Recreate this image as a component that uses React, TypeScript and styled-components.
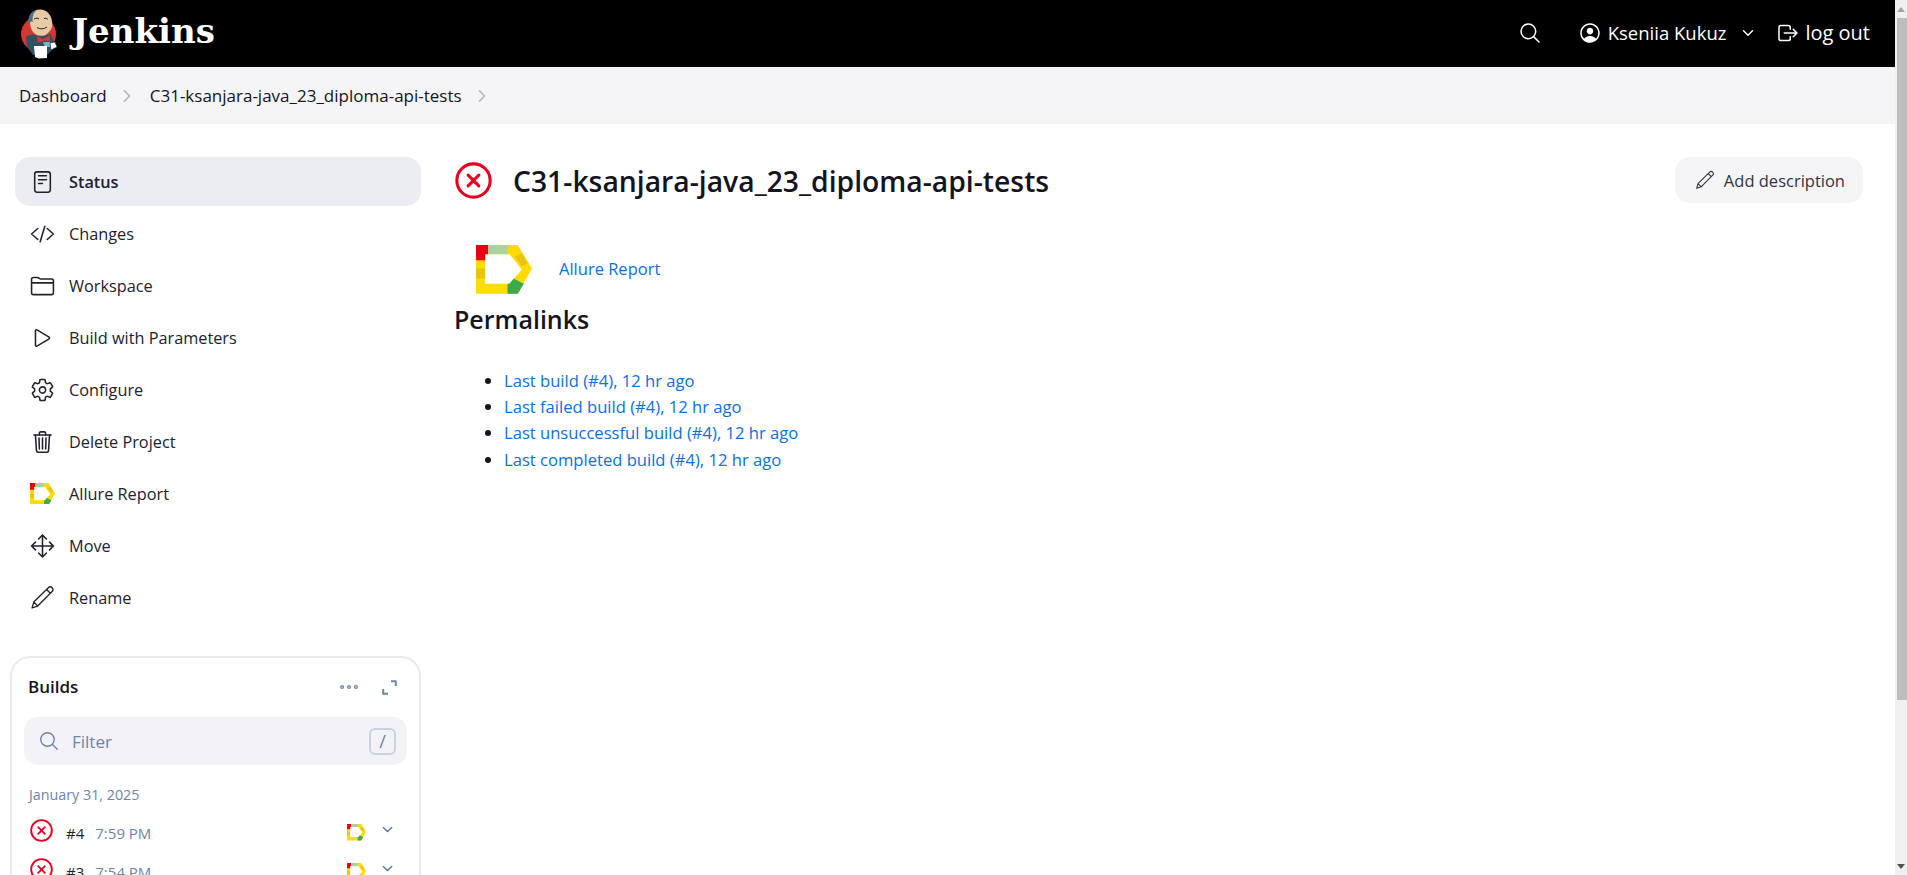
import { ReactNode } from "react";
import styled, { createGlobalStyle } from "styled-components";
import {
  IoChevronDownOutline,
  IoChevronForwardOutline,
  IoCodeSlashOutline,
  IoEllipsisHorizontalOutline,
  IoFolderOutline,
  IoLogOutOutline,
  IoMoveOutline,
  IoPersonCircleOutline,
  IoPlayOutline,
  IoReaderOutline,
  IoSearchOutline,
  IoSettingsOutline,
  IoTrashOutline,
} from "react-icons/io5";

const GlobalStyle = createGlobalStyle`
  html {
    scrollbar-width: none;
  }

  body {
    margin: 0;
    background: #fff;
    color: #14141f;
    font-family: "Open Sans", "Noto Sans", sans-serif;
    font-size: 16px;
  }
`;

const menuItems: { label: string; icon: ReactNode; active?: boolean }[] = [
  { label: "Status", icon: <IoReaderOutline />, active: true },
  { label: "Changes", icon: <IoCodeSlashOutline /> },
  { label: "Workspace", icon: <IoFolderOutline /> },
  { label: "Build with Parameters", icon: <IoPlayOutline /> },
  { label: "Configure", icon: <IoSettingsOutline /> },
  { label: "Delete Project", icon: <IoTrashOutline /> },
  { label: "Allure Report", icon: <AllureIcon size={25} /> },
  { label: "Move", icon: <IoMoveOutline /> },
  { label: "Rename", icon: <PencilIcon size={25} /> },
];

const permalinks = [
  "Last build (#4), 12 hr ago",
  "Last failed build (#4), 12 hr ago",
  "Last unsuccessful build (#4), 12 hr ago",
  "Last completed build (#4), 12 hr ago",
];

const builds = [
  { id: "#4", time: "7:59 PM" },
  { id: "#3", time: "7:54 PM" },
];

function AllureIcon({ size }: { size: number }) {
  return (
    <svg width={size} height={(size * 48) / 55} viewBox="0 0 55 48">
      <path
        fill="#ffdc00"
        fillRule="evenodd"
        d="M0 0H41L55 23L41 48H0ZM9 9V38H33L45 24L33 9Z"
      />
      <path fill="#e60012" d="M0 0H12V9H9V15H0Z" />
      <path fill="#a8d2a5" d="M12 0H31V9H12Z" />
      <path fill="#e5c50e" d="M0 23H9V33H0Z" />
      <path fill="#e5c50e" d="M38 11L45 8L51 18L45 21Z" />
      <path fill="#3aaa4a" d="M37 33L47 38L41 48H31V38H33Z" />
    </svg>
  );
}

function PencilIcon({ size }: { size: number }) {
  return (
    <svg width={size} height={size} viewBox="0 0 24 24" fill="none">
      <path
        d="M2 22L3.6 16.4L17.6 2.6C18.6 1.6 20.2 1.6 21.2 2.6C22.2 3.6 22.2 5.2 21.2 6.2L7.4 20.2L2 22ZM3.6 16.4L7.4 20.2M15.9 4.3L19.5 7.9"
        stroke="currentColor"
        strokeWidth="1.3"
        strokeLinejoin="round"
        strokeLinecap="round"
      />
    </svg>
  );
}

function FailedIcon({ size }: { size: number }) {
  return (
    <svg width={size} height={size} viewBox="0 0 36 36" fill="none">
      <circle cx="18" cy="18" r="16.2" stroke="#e6001f" strokeWidth="3" />
      <path
        d="M12.8 12.8L23.2 23.2M23.2 12.8L12.8 23.2"
        stroke="#e6001f"
        strokeWidth="3"
        strokeLinecap="round"
      />
    </svg>
  );
}

function JenkinsLogo() {
  return (
    <svg width="38" height="50" viewBox="0 0 38 50">
      <circle cx="18.5" cy="25" r="17.5" fill="#d33833" />
      <path
        fill="#335061"
        d="M6 28C10 25 14 25 18 27C23 27 27 26 31 25L34 33L36 36L31 42L27 46H13L7 38Z"
      />
      <path
        fill="#e9caa6"
        d="M10 12C10 5 13 0.5 20 0.5C27 0.5 31 6 32 12C33 18 31 21 28 24C25 27 21 27.5 17 26C12 24 10 18 10 12Z"
      />
      <path
        fill="#49728b"
        d="M9 15C7 9 10 2 17 1C13 4 12 8 13 13C11 12 10 13 9 15Z"
      />
      <path
        fill="none"
        stroke="#231f20"
        strokeWidth="1"
        d="M14 10C16 9 18 9 19 10M24 9.5C26 9 27 9.5 28 10.5M17 18.5C20 20.5 24 20 27 18"
      />
      <path fill="#d33833" d="M17 27L23 30L30 26.5L30 32L24 31.5L18 34Z" />
      <path fill="#81b0c4" d="M23 33H30V38H25Z" />
      <path fill="#fff" d="M14 37H27V49L19 49.5L15 48Z" />
      <path fill="#fff" stroke="#231f20" strokeWidth="0.6" d="M30 34L35 33L37 38L31 41Z" />
    </svg>
  );
}

function ExpandIcon() {
  return (
    <svg width="15" height="15" viewBox="0 0 15 15" fill="none">
      <path
        d="M9 1.2H13.8V6M1.2 9V13.8H6"
        stroke="#6d85a8"
        strokeWidth="2"
        strokeLinejoin="round"
      />
    </svg>
  );
}

export default function App() {
  return (
    <Viewport>
      <GlobalStyle />
      <Header>
        <Brand>
          <JenkinsLogo />
          <BrandName>Jenkins</BrandName>
        </Brand>
        <HeaderActions>
          <HeaderSearch>
            <IoSearchOutline />
          </HeaderSearch>
          <UserLink>
            <IoPersonCircleOutline />
            <span>Kseniia Kukuz</span>
            <UserChevron>
              <IoChevronDownOutline />
            </UserChevron>
          </UserLink>
          <LogoutLink>
            <IoLogOutOutline />
            <span>log out</span>
          </LogoutLink>
        </HeaderActions>
      </Header>

      <Breadcrumbs>
        <Crumb>Dashboard</Crumb>
        <CrumbArrow>
          <IoChevronForwardOutline />
        </CrumbArrow>
        <Crumb>C31-ksanjara-java_23_diploma-api-tests</Crumb>
        <CrumbArrow>
          <IoChevronForwardOutline />
        </CrumbArrow>
      </Breadcrumbs>

      <Page>
        <Sidebar>
          <Menu>
            {menuItems.map((item) => (
              <MenuItem key={item.label} $active={item.active}>
                <MenuIcon>{item.icon}</MenuIcon>
                {item.label}
              </MenuItem>
            ))}
          </Menu>

          <BuildsCard>
            <BuildsHeader>
              <BuildsTitle>Builds</BuildsTitle>
              <BuildsTools>
                <IoEllipsisHorizontalOutline />
                <ExpandIcon />
              </BuildsTools>
            </BuildsHeader>
            <FilterBox>
              <FilterIcon>
                <IoSearchOutline />
              </FilterIcon>
              <FilterInput placeholder="Filter" readOnly />
              <SlashKey>/</SlashKey>
            </FilterBox>
            <BuildsDate>January 31, 2025</BuildsDate>
            {builds.map((build) => (
              <BuildRow key={build.id}>
                <FailedIcon size={23} />
                <BuildId>{build.id}</BuildId>
                <BuildTime>{build.time}</BuildTime>
                <BuildExtras>
                  <AllureIcon size={19} />
                  <BuildChevron>
                    <IoChevronDownOutline />
                  </BuildChevron>
                </BuildExtras>
              </BuildRow>
            ))}
          </BuildsCard>
        </Sidebar>

        <Main>
          <TitleRow>
            <FailedIcon size={37} />
            <Title>C31-ksanjara-java_23_diploma-api-tests</Title>
            <AddDescription>
              <PencilIcon size={20} />
              Add description
            </AddDescription>
          </TitleRow>

          <ReportRow>
            <AllureIcon size={56} />
            <ReportLink href="#">Allure Report</ReportLink>
          </ReportRow>

          <SectionTitle>Permalinks</SectionTitle>
          <PermalinkList>
            {permalinks.map((text) => (
              <li key={text}>
                <PermalinkLink href="#">{text}</PermalinkLink>
              </li>
            ))}
          </PermalinkList>
        </Main>
      </Page>

      <ScrollBar>
        <ScrollArrow $dir="up" />
        <ScrollThumb />
        <ScrollArrow $dir="down" />
      </ScrollBar>
    </Viewport>
  );
}

const Viewport = styled.div`
  height: 875px;
  overflow: hidden;
  padding-right: 12px;
`;

const ScrollBar = styled.div`
  position: fixed;
  top: 0;
  right: 0;
  bottom: 0;
  display: flex;
  flex-direction: column;
  width: 12px;
  background: #f0f0f0;
`;

const ScrollArrow = styled.div<{ $dir: "up" | "down" }>`
  display: flex;
  align-items: center;
  justify-content: center;
  height: 18px;
  margin-top: ${(p) => (p.$dir === "down" ? "auto" : "0")};

  &::before {
    content: "";
    border-left: 4px solid transparent;
    border-right: 4px solid transparent;
    ${(p) =>
      p.$dir === "up"
        ? "border-bottom: 5px solid #a3a3a3;"
        : "border-top: 5px solid #505050;"}
  }
`;

const ScrollThumb = styled.div`
  height: 682px;
  margin-left: 2px;
  background: #bdbdbd;
`;

const Header = styled.header`
  display: flex;
  align-items: center;
  justify-content: space-between;
  height: 67px;
  padding: 0 25px 0 20px;
  background: #000;
  color: #fff;
`;

const Brand = styled.div`
  display: flex;
  align-items: center;
  gap: 14px;
`;

const BrandName = styled.span`
  padding-bottom: 6px;
  font-family: "DejaVu Serif", "Liberation Serif", serif;
  font-size: 34px;
  font-weight: 700;
`;

const HeaderActions = styled.div`
  display: flex;
  align-items: center;
  padding-bottom: 2px;
  font-size: 18.5px;

  svg {
    width: 24px;
    height: 24px;
  }
`;

const HeaderSearch = styled.div`
  display: flex;
  margin-right: 36px;
`;

const UserLink = styled.div`
  display: flex;
  align-items: center;
  gap: 6px;
  margin-right: 20px;
`;

const UserChevron = styled.span`
  display: flex;
  margin-left: 8px;

  svg {
    width: 16px;
    height: 16px;
  }
`;

const LogoutLink = styled.div`
  display: flex;
  align-items: center;
  gap: 5px;
  font-size: 20px;
`;

const Breadcrumbs = styled.nav`
  display: flex;
  align-items: center;
  height: 57px;
  padding: 0 19px;
  background: #f5f5f7;
`;

const Crumb = styled.span`
  font-size: 17px;
  font-weight: 500;
`;

const CrumbArrow = styled.span`
  display: flex;
  margin: 0 14px 0 11px;
  color: #a9bad2;

  svg {
    width: 18px;
    height: 18px;
  }
`;

const Page = styled.div`
  display: flex;
  align-items: flex-start;
`;

const Sidebar = styled.aside`
  flex: none;
  box-sizing: border-box;
  width: 431px;
  padding: 33px 10px 0;
`;

const Menu = styled.div`
  display: flex;
  flex-direction: column;
  gap: 3px;
  padding: 0 0 0 5px;
  margin-bottom: 34px;
`;

const MenuItem = styled.div<{ $active?: boolean }>`
  display: flex;
  align-items: center;
  gap: 14px;
  height: 49px;
  padding-left: 15px;
  border-radius: 15px;
  background: ${(p) => (p.$active ? "#ecedf3" : "transparent")};
  font-size: 16.3px;
  font-weight: ${(p) => (p.$active ? 600 : 400)};
  color: #22222e;
`;

const MenuIcon = styled.span`
  display: flex;
  align-items: center;
  justify-content: center;
  width: 25px;
  height: 25px;
  font-size: 26px;
`;

const BuildsCard = styled.section`
  padding: 17px 12px;
  border: 2px solid #e9e9f2;
  border-bottom: none;
  border-radius: 20px 20px 0 0;
  height: 500px;
  box-sizing: border-box;
`;

const BuildsHeader = styled.div`
  display: flex;
  align-items: center;
  justify-content: space-between;
  padding: 0 10px 0 4px;
  margin-bottom: 18px;
`;

const BuildsTitle = styled.h2`
  margin: 0;
  font-size: 17px;
  font-weight: 600;
  line-height: 24px;
`;

const BuildsTools = styled.div`
  display: flex;
  align-items: center;
  gap: 22px;
  color: #6d85a8;

  svg:first-child {
    width: 22px;
    height: 22px;
  }
`;

const FilterBox = styled.div`
  display: flex;
  align-items: center;
  height: 48px;
  padding: 0 11px 0 14px;
  border-radius: 14px;
  background: #f2f2f7;
`;

const FilterIcon = styled.span`
  display: flex;
  color: #6d85a8;

  svg {
    width: 22px;
    height: 22px;
  }
`;

const FilterInput = styled.input`
  flex: 1;
  min-width: 0;
  margin-left: 12px;
  padding: 0;
  border: none;
  outline: none;
  background: transparent;
  font: inherit;
  font-size: 17px;

  &::placeholder {
    color: #6d85a8;
    opacity: 1;
  }
`;

const SlashKey = styled.span`
  display: flex;
  align-items: center;
  justify-content: center;
  width: 27px;
  height: 27px;
  border: 2px solid #c8d3e2;
  border-radius: 6px;
  box-sizing: border-box;
  color: #6d85a8;
  font-size: 18px;
`;

const BuildsDate = styled.div`
  margin: 20px 0 8px 5px;
  color: #6d85a8;
  font-size: 14.3px;
  line-height: 20px;
`;

const BuildRow = styled.div`
  display: flex;
  align-items: center;
  height: 39px;
  padding: 0 0 0 6px;
  font-size: 15px;

  > svg {
    margin-top: -4px;
  }
`;

const BuildId = styled.span`
  margin-left: 13px;
  color: #22222e;
`;

const BuildTime = styled.span`
  margin-left: 11px;
  color: #6d85a8;
`;

const BuildExtras = styled.div`
  display: flex;
  align-items: center;
  gap: 14px;
  margin-left: auto;
  padding-right: 12px;
`;

const BuildChevron = styled.span`
  display: flex;
  margin-top: -6px;
  color: #5f7797;

  svg {
    width: 15px;
    height: 15px;
  }
`;

const Main = styled.main`
  flex: 1;
  min-width: 0;
  padding: 33px 32px 0 24px;
`;

const TitleRow = styled.div`
  display: flex;
  align-items: center;
  height: 47px;
`;

const Title = styled.h1`
  flex: 1;
  margin: 0 0 0 21px;
  font-size: 28.3px;
  font-weight: 600;
`;

const AddDescription = styled.button`
  display: flex;
  align-items: center;
  align-self: flex-start;
  gap: 9px;
  height: 46px;
  padding: 0 18px 0 21px;
  border: none;
  border-radius: 15px;
  background: #f5f5f7;
  color: #33333f;
  font: inherit;
  font-size: 16.5px;

  svg {
    margin-left: -1px;
  }
`;

const ReportRow = styled.div`
  display: flex;
  align-items: center;
  gap: 27px;
  margin-top: 41px;
  padding-left: 21px;
`;

const ReportLink = styled.a`
  padding-bottom: 2px;
  color: #0b6fdc;
  font-size: 16.5px;
  text-decoration: none;
`;

const SectionTitle = styled.h2`
  margin: 8px 0 0 -1px;
  font-size: 25px;
  font-weight: 600;
  line-height: 34px;
`;

const PermalinkList = styled.ul`
  margin: 32px 0 0;
  padding: 0 0 0 49px;
  font-size: 16.6px;
  line-height: 26.3px;
`;

const PermalinkLink = styled.a`
  color: #0b6fdc;
  text-decoration: none;
`;
